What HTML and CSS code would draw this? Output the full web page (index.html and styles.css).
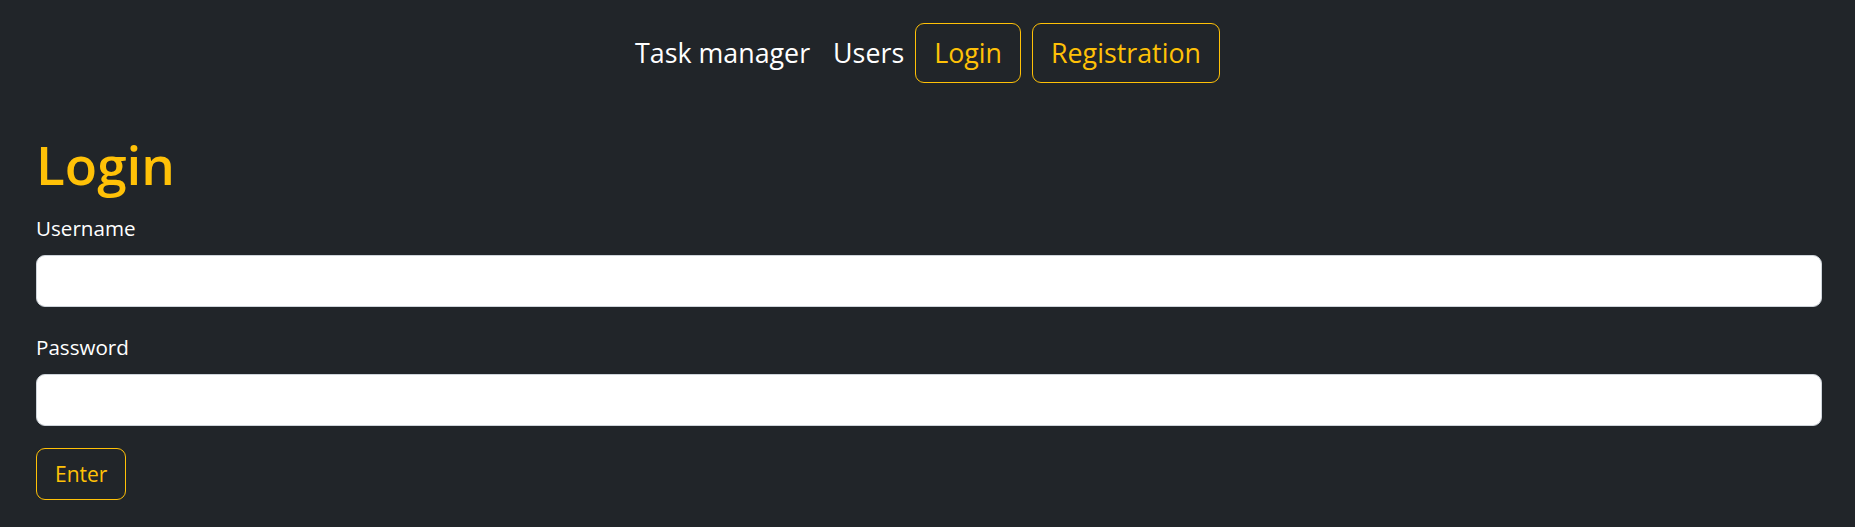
FILE: index.html
```html
<!DOCTYPE html>
<html lang="en">
<head>
<meta charset="utf-8">
<title>Login</title>
<link rel="stylesheet" href="styles.css">
</head>
<body>
<header class="topbar">
  <nav class="nav">
    <a class="nav-link first" href="#">Task manager</a>
    <a class="nav-link" href="#">Users</a>
    <a class="nav-btn" href="#">Login</a>
    <a class="nav-btn" href="#">Registration</a>
  </nav>
</header>
<main class="page">
  <h1 class="title">Login</h1>
  <form class="form">
    <div class="field">
      <label class="label" for="username">Username</label>
      <input class="input" id="username" type="text">
    </div>
    <div class="field">
      <label class="label" for="password">Password</label>
      <input class="input" id="password" type="password">
    </div>
    <button class="submit" type="button">Enter</button>
  </form>
</main>
</body>
</html>
```
FILE: styles.css
```css
* { box-sizing: border-box; }
html, body {
  margin: 0;
  padding: 0;
  background: #212529;
  color: #ffffff;
  font-family: "Open Sans", "Noto Sans", sans-serif;
}
body { min-height: 527px; }

.topbar {
  padding-top: 23px;
}
.nav {
  display: flex;
  justify-content: center;
  align-items: center;
}
.nav-link {
  color: #ffffff;
  text-decoration: none;
  font-size: 26.8px;
  line-height: 40px;
  margin-right: 11px;
}
.nav-link.first { margin-right: 23px; }
.nav-btn {
  color: #ffc107;
  text-decoration: none;
  font-size: 26.8px;
  line-height: 40px;
  padding: 9px 18px;
  border: 1px solid #ffc107;
  border-radius: 9px;
  margin-right: 11px;
}
.nav-btn:last-child { margin-right: 0; }

.page {
  padding: 0 33px 0 36px;
  margin-top: 50px;
}
.title {
  margin: 0 0 16px 0;
  color: #ffc107;
  font-size: 53px;
  line-height: 64px;
  font-weight: 600;
}
.form {
  display: flex;
  flex-direction: column;
  align-items: flex-start;
}
.field {
  width: 100%;
  margin-bottom: 25px;
  display: flex;
  flex-direction: column;
}
.field:nth-child(2) { margin-bottom: 22px; }
.label {
  font-size: 20.6px;
  line-height: 30px;
  margin-bottom: 12px;
  color: #ffffff;
}
.input {
  width: 100%;
  height: 52px;
  border: 1px solid #ced4da;
  border-radius: 9px;
  background: #ffffff;
  font-family: inherit;
  font-size: 20px;
  padding: 0 15px;
  outline: none;
}
.submit {
  font-family: inherit;
  background: transparent;
  color: #ffc107;
  font-size: 21px;
  line-height: 30px;
  padding: 10px 18px;
  border: 1px solid #ffc107;
  border-radius: 9px;
}
```
